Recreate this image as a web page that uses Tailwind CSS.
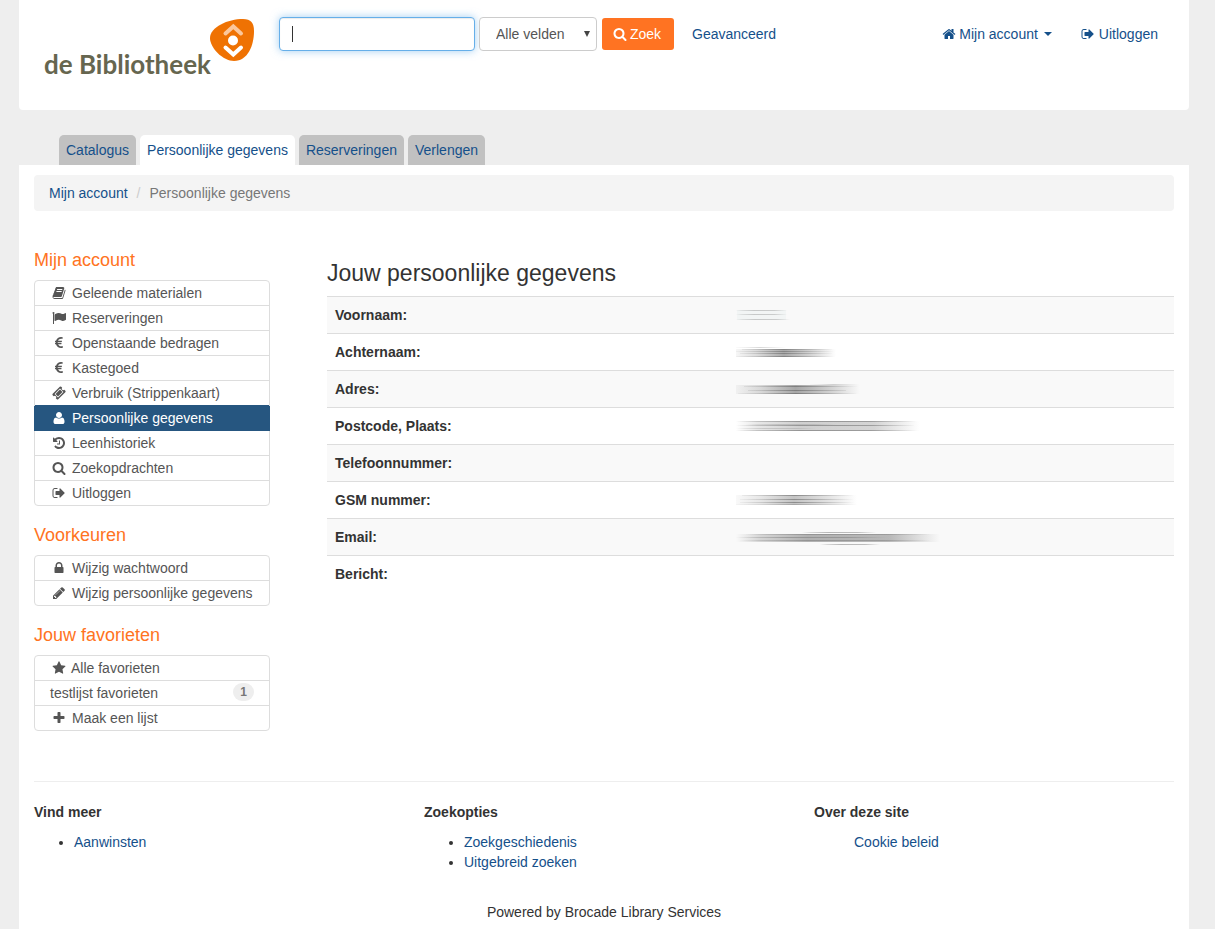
<!DOCTYPE html>
<html lang="nl">
<head>
<meta charset="utf-8">
<meta name="viewport" content="width=device-width, initial-scale=1">
<title>de Bibliotheek - Persoonlijke gegevens</title>
<script src="https://cdn.jsdelivr.net/npm/@tailwindcss/browser@4"></script>
</head>
<body class="flex min-h-screen flex-col bg-[#eee] pl-[19px] pr-[26px] font-['Liberation_Sans',Arial,sans-serif] text-sm leading-5 text-[#333]">

<svg class="hidden" aria-hidden="true">
  <symbol id="home" viewBox="0 0 1792 1792"><path d="M1472 992v480q0 26-19 45t-45 19h-384v-384h-256v384h-384q-26 0-45-19t-19-45v-480q0-1 .5-3t.5-3l575-474 575 474q1 2 1 6zm223-69l-62 74q-8 9-21 11h-3q-13 0-21-7l-692-577-692 577q-12 8-24 7-13-2-21-11l-62-74q-8-10-7-23.5t11-21.5l719-599q32-26 76-26t76 26l244 204v-195q0-14 9-23t23-9h192q14 0 23 9t9 23v408l219 182q10 8 11 21.5t-7 23.5z"/></symbol>
  <symbol id="signout" viewBox="0 0 1792 1792"><path d="M704 1440q0 4 1 20t.5 26.5-3 23.5-10 19.5-20.5 6.5h-320q-119 0-203.5-84.5t-84.5-203.5v-704q0-119 84.5-203.5t203.5-84.5h320q13 0 22.5 9.5t9.5 22.5q0 4 1 20t.5 26.5-3 23.5-10 19.5-20.5 6.5h-320q-66 0-113 47t-47 113v704q0 66 47 113t113 47h312l11.5 1 11.5 3 8 5.5 7 9 2 13.5zm928-544q0 26-19 45l-544 544q-19 19-45 19t-45-19-19-45v-288h-448q-26 0-45-19t-19-45v-384q0-26 19-45t45-19h448v-288q0-26 19-45t45-19 45 19l544 544q19 19 19 45z"/></symbol>
  <symbol id="search" viewBox="0 0 1792 1792"><path d="M1216 832q0-185-131.500-316.500t-316.500-131.500-316.500 131.500-131.500 316.500 131.500 316.500 316.500 131.500 316.500-131.500 131.500-316.500zm512 832q0 52-38 90t-90 38q-54 0-90-38l-343-342q-179 124-399 124-143 0-273.500-55.500t-225-150-150-225-55.500-273.500 55.500-273.500 150-225 225-150 273.500-55.500 273.500 55.500 225 150 150 225 55.500 273.500q0 220-124 399l343 343q37 37 37 90z"/></symbol>
  <symbol id="book" viewBox="0 0 1792 1792"><path d="M1703 478q40 57 18 129l-275 906q-19 64-76.500 107.500t-122.500 43.500h-923q-77 0-148.500-53.500t-99.500-131.500q-24-67-2-127 0-4 3-27t4-37q1-8-3-21.500t-3-19.500q2-11 8-21t16.500-23.500 16.500-23.500q23-38 45-91.500t30-91.500q3-10 .5-30t-.5-28q3-11 17-28t17-23q21-36 42-92t25-90q1-9-2.500-32t.5-28q4-13 22-30.500t22-22.500q19-26 42.500-84.500t27.500-96.500q1-8-3-25.500t-2-26.500q2-8 9-18t18-23 17-21q8-12 16.500-30.500t15-35 16-36 19.500-32 26.500-23.500 36-11.500 47.500 5.500l-1 3q38-9 51-9h761q74 0 114 56t18 130l-274 906q-36 119-71.500 153.500t-128.500 34.500h-869q-27 0-38 15-11 16-1 43 24 70 144 70h923q29 0 56-15.500t35-41.500l300-987q7-22 5-57 38 15 59 43zm-1064 2q-4 13 2 22.500t20 9.500h608q13 0 25.500-9.500t16.500-22.500l21-64q4-13-2-22.500t-20-9.500h-608q-13 0-25.500 9.500t-16.500 22.500zm-83 256q-4 13 2 22.500t20 9.500h608q13 0 25.500-9.500t16.500-22.500l21-64q4-13-2-22.500t-20-9.500h-608q-13 0-25.500 9.500t-16.500 22.500z"/></symbol>
  <symbol id="flag" viewBox="0 0 1792 1792"><path d="M320 256q0 72-64 110v1266q0 13-9.500 22.500t-22.500 9.500h-64q-13 0-22.500-9.500t-9.500-22.500v-1266q-64-38-64-110 0-53 37.500-90.500t90.500-37.500 90.500 37.500 37.500 90.500zm1472 64v763q0 25-12.500 38.500t-39.500 27.500q-215 116-369 116-61 0-123.500-22t-108.500-48-115.500-48-142.500-22q-192 0-464 146-17 9-33 9-26 0-45-19t-19-45v-742q0-32 31-55 21-14 79-43 236-120 421-120 107 0 200 29t219 88q38 19 88 19 54 0 117.500-21t110-47 88-47 54.500-21q26 0 45 19t19 45z"/></symbol>
  <symbol id="euro" viewBox="0 0 1792 1792"><path d="M1360 1307l35 159q3 12-3 22.500t-17 14.500l-5 1q-4 2-10.500 3.500t-16 4.500-21.500 5.500-25.500 5-30 5-33.500 4.500-36.500 3-38.500 1q-234 0-409-130.500t-238-351.500h-95q-13 0-22.500-9.500t-9.500-22.500v-113q0-13 9.500-22.500t22.500-9.500h66q-2-57 1-105h-67q-14 0-23-9t-9-23v-114q0-14 9-23t23-9h98q67-210 243.500-338t400.500-128q102 0 194 23 11 3 20 15 6 11 3 24l-43 159q-3 13-14 19.500t-24 2.500l-4-1q-4-1-11.500-2.500l-17.500-3.500-22.500-3.500-26-3-29-2.500-29.500-1q-126 0-226 64t-150 176h468q16 0 25 12 10 12 7 26l-24 114q-5 26-32 26h-488q-3 37 0 105h459q15 0 25 12 9 12 6 27l-24 112q-2 11-11 18.500t-20 7.500h-387q48 117 149.500 185.500t228.500 68.500q18 0 36-1.500t33.500-3.500 29.500-4.500 24.500-5 18.500-4.500l12-3 5-2q13-5 26 2 12 7 15 21z"/></symbol>
  <symbol id="ticket" viewBox="0 0 1792 1792"><path d="M1024 452l316 316-572 572-316-316zm-211 979l618-618q19-19 19-45t-19-45l-362-362q-18-18-45-18t-45 18l-618 618q-19 19-19 45t19 45l362 362q18 18 45 18t45-18zm889-637l-907 908q-37 37-90.500 37t-90.500-37l-126-126q56-56 56-136t-56-136-136-56-136 56l-125-126q-37-37-37-90.500t37-90.500l907-906q37-37 90.500-37t90.500 37l125 125q-56 56-56 136t56 136 136 56 136-56l126 125q37 37 37 90.500t-37 90.500z"/></symbol>
  <symbol id="user" viewBox="0 0 1792 1792"><path d="M1600 1405q0 120-73 189.500t-194 69.500h-874q-121 0-194-69.500t-73-189.500q0-53 3.500-103.500t14-109 26.500-108.500 43-97.500 62-81 85.500-53.500 111.500-20q9 0 42 21.500t74.500 48 108 48 133.500 21.500 133.500-21.500 108-48 74.500-48 42-21.500q61 0 111.500 20t85.500 53.500 62 81 43 97.500 26.500 108.500 14 109 3.500 103.500zm-320-893q0 159-112.500 271.500t-271.500 112.500-271.500-112.500-112.500-271.500 112.500-271.500 271.500-112.500 271.500 112.500 112.500 271.500z"/></symbol>
  <symbol id="history" viewBox="0 0 1792 1792"><path d="M1664 896q0 156-61 298t-164 245-245 164-298 61q-172 0-327-72.500t-264-204.500q-7-10-6.500-22.500t8.500-20.500l137-138q10-9 25-9 16 2 23 12 73 95 179 147t225 52q104 0 198.500-40.500t163.500-109.500 109.500-163.500 40.500-198.500-40.500-198.500-109.500-163.500-163.500-109.500-198.500-40.500q-98 0-188 35.500t-160 101.500l137 138q31 30 14 69-17 40-59 40h-448q-26 0-45-19t-19-45v-448q0-42 40-59 39-17 69 14l130 129q107-101 244.500-156.500t284.500-55.500q156 0 298 61t245 164 164 245 61 298zm-640-288v448q0 14-9 23t-23 9h-320q-14 0-23-9t-9-23v-64q0-14 9-23t23-9h224v-352q0-14 9-23t23-9h64q14 0 23 9t9 23z"/></symbol>
  <symbol id="lock" viewBox="0 0 1792 1792"><path d="M640 768h512v-192q0-106-75-181t-181-75-181 75-75 181v192zm832 96v576q0 40-28 68t-68 28h-960q-40 0-68-28t-28-68v-576q0-40 28-68t68-28h32v-192q0-184 132-316t316-132 316 132 132 316v192h32q40 0 68 28t28 68z"/></symbol>
  <symbol id="pencil" viewBox="0 0 1792 1792"><path d="M491 1536l91-91-235-235-91 91v107h128v128h107zm523-928q0-22-22-22-10 0-17 7l-542 542q-7 7-7 17 0 22 22 22 10 0 17-7l542-542q7-7 7-17zm-54-192l416 416-832 832h-416v-416zm683 96q0 53-37 90l-166 166-416-416 166-165q36-38 90-38 53 0 91 38l235 234q37 39 37 91z"/></symbol>
  <symbol id="star" viewBox="0 0 1792 1792"><path d="M1728 647q0 22-26 48l-363 354 86 500q1 7 1 20 0 21-10.500 35.500t-30.500 14.500q-19 0-40-12l-449-236-449 236q-22 12-40 12-21 0-31.500-14.500t-10.500-35.500q0-6 2-20l86-500-364-354q-25-27-25-48 0-37 56-46l502-73 225-455q19-41 49-41t49 41l225 455 502 73q56 9 56 46z"/></symbol>
  <symbol id="plus" viewBox="0 0 1792 1792"><path d="M1600 736v192q0 40-28 68t-68 28h-416v416q0 40-28 68t-68 28h-192q-40 0-68-28t-28-68v-416h-416q-40 0-68-28t-28-68v-192q0-40 28-68t68-28h416v-416q0-40 28-68t68-28h192q40 0 68 28t28 68v416h416q40 0 68 28t28 68z"/></symbol>
</svg>

<!-- Gradients for the smudged personal data; kept rendered so the fills resolve -->
<svg class="absolute h-0 w-0" aria-hidden="true">
  <defs>
    <linearGradient id="mid"><stop offset="0" stop-color="#555" stop-opacity=".1"/><stop offset=".2" stop-color="#555" stop-opacity=".4"/><stop offset=".48" stop-color="#555"/><stop offset=".75" stop-color="#555" stop-opacity=".5"/><stop offset="1" stop-color="#555" stop-opacity="0"/></linearGradient>
    <linearGradient id="flat"><stop offset="0" stop-color="#777" stop-opacity="0"/><stop offset=".12" stop-color="#777" stop-opacity=".5"/><stop offset=".35" stop-color="#777"/><stop offset=".75" stop-color="#777" stop-opacity=".9"/><stop offset="1" stop-color="#777" stop-opacity="0"/></linearGradient>
  </defs>
</svg>

<header class="flex h-[110px] shrink-0 items-start rounded-b bg-white pl-[25px] pr-[31px]">
  <a href="#" class="mt-[18px] flex shrink-0 items-start" aria-label="de Bibliotheek">
    <span class="mt-8 w-[166px] whitespace-nowrap font-[Lato,sans-serif] text-[26px] leading-7 font-bold text-[#66664f]">de Bibliotheek</span>
    <svg class="h-[43px] w-11" viewBox="0 0 44 43" fill="none">
      <path fill="#ef7203" d="M0 20C0 9 18 1 33 1C41 1 44 5 44 13C44 27 38 43 24 43C13 43 0 30 0 20Z"/>
      <path stroke="#fbc79c" stroke-width="4" stroke-linecap="round" d="M15.500 15.500L23.300 8.500L31 15.500"/>
      <circle cx="23" cy="22.500" r="5" fill="#fff"/>
      <path stroke="#fff" stroke-width="4" stroke-linecap="round" d="M15.500 29.500L23.300 36.500L31 29.500"/>
    </svg>
  </a>
  <form class="ml-[25px] mt-[17px] flex items-center gap-1" onsubmit="return false">
    <div class="relative">
      <input type="text" aria-label="Zoekterm" class="block h-[34px] w-[196px] rounded border border-[#66afe9] bg-white px-3 text-[#555] shadow-[inset_0_1px_1px_rgba(0,0,0,0.08),0_0_8px_rgba(102,175,233,0.6)] outline-none">
      <span class="pointer-events-none absolute left-[13px] top-[9px] h-4 w-px bg-[#333]"></span>
    </div>
    <div class="relative">
      <select aria-label="Zoekveld" class="block h-[34px] w-[118px] appearance-none rounded border border-[#ccc] bg-white pl-4 text-[#555]"><option>Alle velden</option></select>
      <svg class="pointer-events-none absolute right-[7px] top-3.5 h-1.5 w-1.5" viewBox="0 0 6 6"><path fill="#444" d="M0 0h6L3 6z"/></svg>
    </div>
    <button type="submit" class="ml-px flex h-8 w-[72px] cursor-pointer items-center gap-[3px] rounded-[3px] bg-[#ff7322] pl-[11px] text-white"><svg class="h-3.5 w-3.5" fill="currentColor"><use href="#search"/></svg>Zoek</button>
    <a href="#" class="ml-3.5 text-[#15508a]">Geavanceerd</a>
  </form>
  <nav class="ml-auto mt-6 flex gap-[29px] text-[#15508a]" aria-label="Account">
    <a href="#" class="flex items-center gap-[3px]"><svg class="h-3.5 w-3.5" fill="currentColor"><use href="#home"/></svg>Mijn account<svg class="ml-[3px] h-1 w-2" viewBox="0 0 8 4" fill="currentColor"><path d="M0 0h8L4 4z"/></svg></a>
    <a href="#" class="flex items-center gap-1"><svg class="h-3.5 w-3.5" fill="currentColor"><use href="#signout"/></svg>Uitloggen</a>
  </nav>
</header>

<nav class="mt-[25px] flex gap-1 pl-10 text-[#15508a]" aria-label="Tabbladen">
  <a href="#" class="rounded-t-[5px] bg-[#c1c1c1] px-[7px] py-[5px]">Catalogus</a>
  <a href="#" class="rounded-t-[5px] bg-white px-[7px] py-[5px]" aria-current="page">Persoonlijke gegevens</a>
  <a href="#" class="rounded-t-[5px] bg-[#c1c1c1] px-[7px] py-[5px]">Reserveringen</a>
  <a href="#" class="rounded-t-[5px] bg-[#c1c1c1] px-[7px] py-[5px]">Verlengen</a>
</nav>

<div class="grow bg-white px-[15px] pt-2.5">
  <ol class="flex rounded bg-[#f4f4f4] px-[15px] py-2">
    <li><a href="#" class="text-[#15508a]">Mijn account</a></li>
    <li class="px-[9px] text-[#ccc]" aria-hidden="true">/</li>
    <li class="text-[#777]">Persoonlijke gegevens</li>
  </ol>

  <div class="mt-[39px] flex items-start gap-[57px]">
    <aside class="w-[236px] shrink-0 text-[#555]">
      <h2 class="mb-2.5 text-lg leading-5 text-[#ff7322]">Mijn account</h2>
      <ul class="mb-[19px] rounded border border-[#ddd] leading-6">
        <li class="border-b border-[#ddd]"><a href="#" class="flex items-center gap-1 px-[15px]"><svg class="mx-0.5 h-3.5 w-3.5" fill="currentColor"><use href="#book"/></svg>Geleende materialen</a></li>
        <li class="border-b border-[#ddd]"><a href="#" class="flex items-center gap-1 px-[15px]"><svg class="mx-0.5 h-3.5 w-3.5" fill="currentColor"><use href="#flag"/></svg>Reserveringen</a></li>
        <li class="border-b border-[#ddd]"><a href="#" class="flex items-center gap-1 px-[15px]"><svg class="mx-0.5 h-3.5 w-3.5" fill="currentColor"><use href="#euro"/></svg>Openstaande bedragen</a></li>
        <li class="border-b border-[#ddd]"><a href="#" class="flex items-center gap-1 px-[15px]"><svg class="mx-0.5 h-3.5 w-3.5" fill="currentColor"><use href="#euro"/></svg>Kastegoed</a></li>
        <li class="border-b border-[#265680]"><a href="#" class="flex items-center gap-1 px-[15px]"><svg class="mx-0.5 h-3.5 w-3.5" fill="currentColor"><use href="#ticket"/></svg>Verbruik (Strippenkaart)</a></li>
        <li class="-mx-px border-x border-b border-[#265680] bg-[#265680] text-white"><a href="#" class="flex items-center gap-1 px-[15px]" aria-current="page"><svg class="mx-0.5 h-3.5 w-3.5" fill="currentColor"><use href="#user"/></svg>Persoonlijke gegevens</a></li>
        <li class="border-b border-[#ddd]"><a href="#" class="flex items-center gap-1 px-[15px]"><svg class="mx-0.5 h-3.5 w-3.5" fill="currentColor"><use href="#history"/></svg>Leenhistoriek</a></li>
        <li class="border-b border-[#ddd]"><a href="#" class="flex items-center gap-1 px-[15px]"><svg class="mx-0.5 h-3.5 w-3.5" fill="currentColor"><use href="#search"/></svg>Zoekopdrachten</a></li>
        <li><a href="#" class="flex items-center gap-1 px-[15px]"><svg class="mx-0.5 h-3.5 w-3.5" fill="currentColor"><use href="#signout"/></svg>Uitloggen</a></li>
      </ul>
      <h2 class="mb-2.5 text-lg leading-5 text-[#ff7322]">Voorkeuren</h2>
      <ul class="mb-[19px] rounded border border-[#ddd] leading-6">
        <li class="border-b border-[#ddd]"><a href="#" class="flex items-center gap-1 px-[15px]"><svg class="mx-0.5 h-3.5 w-3.5" fill="currentColor"><use href="#lock"/></svg>Wijzig wachtwoord</a></li>
        <li><a href="#" class="flex items-center gap-1 px-[15px]"><svg class="mx-0.5 h-3.5 w-3.5" fill="currentColor"><use href="#pencil"/></svg>Wijzig persoonlijke gegevens</a></li>
      </ul>
      <h2 class="mb-2.5 text-lg leading-5 text-[#ff7322]">Jouw favorieten</h2>
      <ul class="rounded border border-[#ddd] leading-6">
        <li class="border-b border-[#ddd]"><a href="#" class="flex items-center gap-[3px] px-[15px]"><svg class="mx-0.5 h-3.5 w-3.5" fill="currentColor"><use href="#star"/></svg>Alle favorieten</a></li>
        <li class="border-b border-[#ddd]"><a href="#" class="flex items-start justify-between px-[15px]">testlijst favorieten<span class="mt-0.5 rounded-full bg-[#eee] px-[7px] text-xs leading-[18px] font-bold text-[#777]">1</span></a></li>
        <li><a href="#" class="flex items-center gap-1 px-[15px]"><svg class="mx-0.5 h-3.5 w-3.5" fill="currentColor"><use href="#plus"/></svg>Maak een lijst</a></li>
      </ul>
    </aside>

    <main class="mt-2.5 grow">
      <h1 class="mb-2.5 text-[23px] leading-[26px]">Jouw persoonlijke gegevens</h1>
      <table class="w-full text-left">
        <tbody>
          <tr class="border-t border-[#ddd] bg-[#f9f9f9]"><th scope="row" class="w-[402px] p-2">Voornaam:</th><td class="px-[7px]">
            <svg class="block h-4 w-[54px]" viewBox="0 0 54 16"><path fill="#f2f5f5" d="M1 3h49v10H1z"/><g fill="url(#flat)" opacity=".35"><path d="M0 3h51v1H0z"/><path d="M0 7h51v1H0z"/><path d="M0 12h54v1H0z"/></g></svg></td></tr>
          <tr class="border-t border-[#ddd]"><th scope="row" class="p-2">Achternaam:</th><td class="px-[7px]">
            <svg class="block h-4 w-[100px]" viewBox="0 0 100 16"><path fill="url(#mid)" opacity=".5" d="M0 5h100v8H0z"/><g fill="url(#mid)" opacity=".45"><path d="M0 3h50v1H0z" opacity=".5"/><path d="M6 5h90v1H6zM0 7h98v1H0zM4 9h92v1H4zM0 12h98v1H0z"/></g></svg></td></tr>
          <tr class="border-t border-[#ddd] bg-[#f9f9f9]"><th scope="row" class="p-2">Adres:</th><td class="px-[7px]">
            <svg class="block h-4 w-[124px]" viewBox="0 0 124 16"><path fill="url(#mid)" opacity=".5" d="M0 4h124v9H0z"/><g fill="url(#mid)" opacity=".5"><path d="M74 3h49v1H74z" opacity=".5"/><path d="M8 5h114v1H8zM12 9h98v1H12zM2 12h118v1H2z"/></g></svg></td></tr>
          <tr class="border-t border-[#ddd]"><th scope="row" class="p-2">Postcode, Plaats:</th><td class="px-[7px]">
            <svg class="block h-4 w-[184px]" viewBox="0 0 184 16"><path fill="url(#flat)" opacity=".35" d="M0 3h184v10H0z"/><g fill="url(#flat)" opacity=".65"><path d="M0 3h180v1H0zM0 7h178v1H0zM0 12h180v1H0z"/><path d="M10 6h90v1H10z" opacity=".4"/><path d="M0 10h80v1H0z" opacity=".4"/></g></svg></td></tr>
          <tr class="border-t border-[#ddd] bg-[#f9f9f9]"><th scope="row" class="p-2">Telefoonnummer:</th><td></td></tr>
          <tr class="border-t border-[#ddd]"><th scope="row" class="p-2">GSM nummer:</th><td class="px-[7px]">
            <svg class="block h-4 w-[121px]" viewBox="0 0 121 16"><path fill="url(#mid)" opacity=".35" d="M0 3h121v10H0z"/><g fill="url(#mid)" opacity=".5"><path d="M6 3h112v1H6zM4 7h114v1H4zM4 10h114v1H4z"/><path d="M0 12h121v1H0z" opacity=".5"/></g></svg></td></tr>
          <tr class="border-t border-[#ddd] bg-[#f9f9f9]"><th scope="row" class="p-2">Email:</th><td class="px-[7px]">
            <svg class="block h-4 w-[204px]" viewBox="0 0 204 16"><path fill="url(#flat)" opacity=".55" d="M0 5h204v8H0z"/><g fill="url(#flat)" opacity=".5"><path d="M66 3h74v1H66z"/><path d="M10 5h184v1H10z"/><path d="M0 8h150v1H0z"/><path d="M4 11h190v1H4z"/><path d="M84 15h60v1H84z"/></g></svg></td></tr>
          <tr class="border-t border-[#ddd]"><th scope="row" class="p-2">Bericht:</th><td></td></tr>
        </tbody>
      </table>
    </main>
  </div>

  <footer class="mt-[50px] border-t border-[#eee] pt-5">
    <div class="-mr-[30px] grid grid-cols-3 [&_a]:text-[#15508a]">
      <section><h3 class="mb-2.5 font-bold">Vind meer</h3><ul class="list-disc pl-10"><li><a href="#">Aanwinsten</a></li></ul></section>
      <section><h3 class="mb-2.5 font-bold">Zoekopties</h3><ul class="list-disc pl-10"><li><a href="#">Zoekgeschiedenis</a></li><li><a href="#">Uitgebreid zoeken</a></li></ul></section>
      <section><h3 class="mb-2.5 font-bold">Over deze site</h3><ul class="pl-10"><li><a href="#">Cookie beleid</a></li></ul></section>
    </div>
    <p class="mt-[30px] text-center">Powered by Brocade Library Services</p>
  </footer>
</div>
</body>
</html>
